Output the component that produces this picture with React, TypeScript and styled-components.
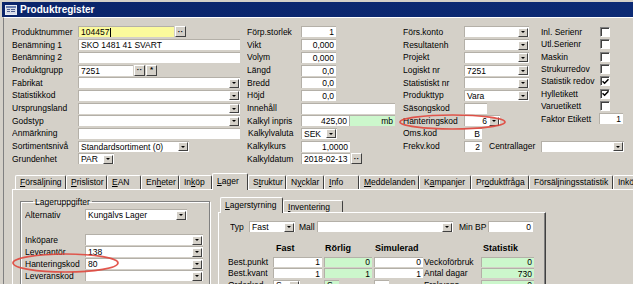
import React from "react";
import styled, { createGlobalStyle } from "styled-components";

const GlobalStyle = createGlobalStyle`
  html, body {
    margin: 0;
    padding: 0;
    background: #d4d0c8;
  }
  body {
    font-family: "Liberation Sans", Arial, sans-serif;
    font-size: 8.5px;
    color: #000;
  }
`;

const Window = styled.div`
  position: relative;
  width: 633px;
  height: 284px;
  overflow: hidden;
  background: #d4d0c8;
  display: flex;
  flex-direction: column;
`;

const TitleBar = styled.div`
  flex-shrink: 0;
  height: 15px;
  margin: 2px 0 0 2px;
  padding-left: 3px;
  display: flex;
  align-items: center;
  gap: 3px;
  background: linear-gradient(90deg, #0a246a 0%, #0c2a74 100%);
  color: #fff;
  font-size: 10px;
  font-weight: bold;
`;

const Body = styled.div`
  flex: 1;
  min-height: 0;
  margin-left: 3px;
  padding-left: 8px;
  border-left: 1px solid #808080;
  border-top: 1px solid #fff;
  display: flex;
  flex-direction: column;
`;

const TopForm = styled.div`
  display: flex;
  padding-top: 7.6px;
  flex-shrink: 0;
`;

const Column = styled.div<{ $w?: number }>`
  display: flex;
  flex-direction: column;
  flex-shrink: 0;
  width: ${(p) => (p.$w ? `${p.$w}px` : "auto")};
`;

const Row = styled.div<{ $h?: number }>`
  display: flex;
  align-items: center;
  height: ${(p) => p.$h ?? 12.7}px;
  flex-shrink: 0;
  white-space: nowrap;
`;

const Label = styled.span<{ $w: number; $indent?: number; $gap?: number }>`
  flex-shrink: 0;
  box-sizing: border-box;
  width: ${(p) => p.$w}px;
  margin-left: ${(p) => p.$gap ?? 0}px;
  padding-left: ${(p) => p.$indent ?? 0}px;
  overflow: hidden;
`;

const Field = styled.div<{ $w: number; $bg?: string; $h?: number }>`
  box-sizing: border-box;
  flex-shrink: 0;
  width: ${(p) => p.$w}px;
  height: ${(p) => p.$h ?? 11}px;
  display: flex;
  align-items: center;
  background: ${(p) => p.$bg ?? "#fff"};
  border-top: 1px solid #b4b0a8;
  border-left: 1px solid #b4b0a8;
  overflow: hidden;
  white-space: nowrap;
`;

const Value = styled.span<{ $align?: "left" | "right" }>`
  flex: 1;
  padding: 0 2px;
  text-align: ${(p) => p.$align ?? "left"};
  overflow: hidden;
  display: flex;
  align-items: center;
  justify-content: ${(p) => (p.$align === "right" ? "flex-end" : "flex-start")};
`;

const Caret = styled.span`
  display: inline-block;
  width: 1px;
  height: 9px;
  margin-left: 1px;
  background: #000;
`;

const DropArrow = styled.span`
  flex-shrink: 0;
  box-sizing: border-box;
  width: 10px;
  height: 9px;
  margin-right: 1px;
  background: #d4d0c8;
  border-top: 1px solid #fff;
  border-left: 1px solid #fff;
  border-right: 1px solid #404040;
  border-bottom: 1px solid #404040;
  display: flex;
  align-items: center;
  justify-content: center;
  &::after {
    content: "";
    border-left: 2px solid transparent;
    border-right: 2px solid transparent;
    border-top: 2px solid #000;
  }
`;

const SmallButton = styled.span`
  flex-shrink: 0;
  box-sizing: border-box;
  width: 11px;
  height: 11px;
  margin-left: 1px;
  background: #d4d0c8;
  border-top: 1px solid #fff;
  border-left: 1px solid #fff;
  border-right: 1px solid #404040;
  border-bottom: 1px solid #404040;
  display: flex;
  align-items: center;
  justify-content: center;
  font-size: 8px;
  font-weight: bold;
  line-height: 1;
`;

const Check = styled.span`
  flex-shrink: 0;
  box-sizing: border-box;
  width: 10px;
  height: 10px;
  background: #fff;
  border-top: 1px solid #808080;
  border-left: 1px solid #808080;
  border-right: 1px solid #fff;
  border-bottom: 1px solid #fff;
  box-shadow: inset 1px 1px 0 #404040;
  display: flex;
  align-items: center;
  justify-content: center;
`;

const TabStrip = styled.div<{ $h: number; $pad: number }>`
  flex-shrink: 0;
  display: flex;
  align-items: flex-end;
  height: ${(p) => p.$h}px;
  padding-left: ${(p) => p.$pad}px;
`;

const Tab = styled.div<{ $w: number; $h: number; $active?: boolean }>`
  position: relative;
  z-index: ${(p) => (p.$active ? 2 : 0)};
  box-sizing: border-box;
  flex-shrink: 0;
  width: ${(p) => p.$w}px;
  height: ${(p) => (p.$active ? p.$h + 3 : p.$h)}px;
  margin-bottom: ${(p) => (p.$active ? -1 : 0)}px;
  padding: ${(p) => (p.$active ? "2px 0 0 4px" : "1px 0 0 4px")};
  line-height: 11px;
  background: #d4d0c8;
  border-top: 1px solid #fff;
  border-left: 1px solid #fff;
  border-right: 1px solid #404040;
  border-radius: 2px 2px 0 0;
  white-space: nowrap;
  overflow: hidden;
`;

const Panel = styled.div`
  position: relative;
  z-index: 1;
  flex: 1;
  display: flex;
  align-items: flex-start;
  border-top: 1px solid #fff;
  border-left: 1px solid #fff;
`;

const GroupBox = styled.fieldset`
  box-sizing: border-box;
  flex-shrink: 0;
  width: 190px;
  height: 110px;
  margin: 7px 0 0 7px;
  padding: 0 0 0 4px;
  border: 1px solid #808080;
  box-shadow: 1px 1px 0 #fff, inset 1px 1px 0 #fff;
`;

const Legend = styled.legend`
  margin-left: 8px;
  padding: 0 2px;
  line-height: 10px;
`;

const StockBlock = styled.div`
  flex-shrink: 0;
  width: 328px;
  margin: 7px 0 0 8px;
  display: flex;
  flex-direction: column;
`;

const InnerPanel = styled.div`
  position: relative;
  z-index: 1;
  box-sizing: border-box;
  height: 90px;
  padding: 7.4px 0 0 9px;
  border-top: 1px solid #fff;
  border-left: 1px solid #fff;
  border-right: 1px solid #404040;
  box-shadow: inset -1px 0 0 #808080;
`;

const StatGrid = styled.div`
  display: grid;
  grid-template-columns: 45px 51px 50px 50px 57px 53px;
  grid-auto-rows: 11.6px;
  align-items: center;
  margin-top: 2.8px;
  white-space: nowrap;
`;

const HeaderRow = styled.div`
  display: grid;
  grid-template-columns: 45px 51px 50px 50px 57px 53px;
  height: 10px;
  margin-top: 10px;
  align-items: center;
  font-size: 9px;
  font-weight: bold;
  white-space: nowrap;
`;

const Head = styled.span<{ $col: number; $pad?: number }>`
  grid-column: ${(p) => p.$col};
  padding-left: ${(p) => p.$pad ?? 1}px;
`;

const Annotation = styled.svg<{ $x: number; $y: number }>`
  position: absolute;
  left: ${(p) => p.$x}px;
  top: ${(p) => p.$y}px;
  z-index: 10;
  pointer-events: none;
`;

type FieldProps = {
  w: number;
  value?: React.ReactNode;
  bg?: string;
  right?: boolean;
  h?: number;
};

const TextField = ({ w, value, bg, right, h }: FieldProps) => (
  <Field $w={w} $bg={bg} $h={h}>
    <Value $align={right ? "right" : "left"}>{value}</Value>
  </Field>
);

const Combo = ({ w, value, bg, right, h }: FieldProps) => (
  <Field $w={w} $bg={bg} $h={h}>
    <Value $align={right ? "right" : "left"}>{value}</Value>
    <DropArrow />
  </Field>
);

const CheckBox = ({ checked }: { checked?: boolean }) => (
  <Check>
    {checked && (
      <svg width="7" height="7" viewBox="0 0 7 7">
        <path d="M0.5 3.2 L2.6 5.3 L6.5 1.2" fill="none" stroke="#000" strokeWidth="1.5" />
      </svg>
    )}
  </Check>
);

const WindowIcon = () => (
  <svg width="12" height="10" viewBox="0 0 12 10">
    <rect x="0.5" y="0.5" width="11" height="9" fill="#d8dce8" stroke="#e8ecf4" />
    <rect x="1" y="1" width="10" height="2" fill="#6a7fb0" />
    <rect x="2" y="4" width="3" height="1" fill="#506090" />
    <rect x="6" y="4" width="4" height="1" fill="#506090" />
    <rect x="2" y="6" width="3" height="1" fill="#506090" />
    <rect x="6" y="6" width="4" height="1" fill="#506090" />
  </svg>
);

const Ellipse = ({ x, y, w, h }: { x: number; y: number; w: number; h: number }) => (
  <Annotation $x={x} $y={y} width={w} height={h} viewBox={`0 0 ${w} ${h}`}>
    <ellipse
      cx={w / 2}
      cy={h / 2}
      rx={w / 2 - 1}
      ry={h / 2 - 1}
      fill="none"
      stroke="#e0463c"
      strokeWidth="1.7"
      opacity="0.9"
    />
  </Annotation>
);

const YELLOW = "#fbfa9c";
const GREEN = "#ccf7cc";

const mainTabs: { label: React.ReactNode; w: number; active?: boolean }[] = [
  { label: <><u>F</u>örsäljning</>, w: 51 },
  { label: <><u>P</u>rislistor</>, w: 41 },
  { label: <><u>E</u>AN</>, w: 34 },
  { label: <>En<u>h</u>eter</>, w: 38 },
  { label: <>In<u>k</u>öp</>, w: 33 },
  { label: <><u>L</u>ager</>, w: 36, active: true },
  { label: <>S<u>t</u>ruktur</>, w: 38 },
  { label: <>N<u>y</u>cklar</>, w: 38 },
  { label: <><u>I</u>nfo</>, w: 35 },
  { label: <><u>M</u>eddelanden</>, w: 60 },
  { label: <>K<u>a</u>mpanjer</>, w: 52 },
  { label: <>Pr<u>o</u>duktfråga</>, w: 58 },
  { label: <>Försäljningsstatistik</>, w: 84 },
  { label: <>Inköpsstatistik</>, w: 60 },
];

const App = () => {
  return (
    <>
      <GlobalStyle />
      <Window>
        <TitleBar>
          <WindowIcon />
          Produktregister
        </TitleBar>
        <Body>
          <TopForm>
            <Column $w={235}>
              <Row>
                <Label $w={66}>Produktnummer</Label>
                <Field $w={96} $bg={YELLOW}>
                  <Value>
                    104457
                    <Caret />
                  </Value>
                </Field>
                <SmallButton>··</SmallButton>
              </Row>
              <Row>
                <Label $w={66}>Benämning 1</Label>
                <TextField w={162} value="SKO 1481 41 SVART" />
              </Row>
              <Row>
                <Label $w={66}>Benämning 2</Label>
                <TextField w={162} />
              </Row>
              <Row>
                <Label $w={66}>Produktgrupp</Label>
                <TextField w={55} value="7251" />
                <SmallButton>··</SmallButton>
                <SmallButton>*</SmallButton>
              </Row>
              <Row>
                <Label $w={66}>Fabrikat</Label>
                <Combo w={162} />
              </Row>
              <Row>
                <Label $w={66}>Statistikkod</Label>
                <Combo w={162} />
              </Row>
              <Row>
                <Label $w={66}>Ursprungsland</Label>
                <Combo w={162} />
              </Row>
              <Row>
                <Label $w={66}>Godstyp</Label>
                <Combo w={162} />
              </Row>
              <Row>
                <Label $w={66}>Anmärkning</Label>
                <TextField w={162} />
              </Row>
              <Row>
                <Label $w={66}>Sortimentsnivå</Label>
                <Combo w={111} value="Standardsortiment (0)" />
              </Row>
              <Row>
                <Label $w={66}>Grundenhet</Label>
                <Combo w={36} value="PAR" />
              </Row>
            </Column>

            <Column $w={156}>
              <Row>
                <Label $w={54}>Förp.storlek</Label>
                <TextField w={35} value="1" right />
              </Row>
              <Row>
                <Label $w={54}>Vikt</Label>
                <TextField w={35} value="0,000" right />
              </Row>
              <Row>
                <Label $w={54}>Volym</Label>
                <TextField w={35} value="0,000" right />
              </Row>
              <Row>
                <Label $w={54}>Längd</Label>
                <TextField w={35} value="0,0" right />
              </Row>
              <Row>
                <Label $w={54}>Bredd</Label>
                <TextField w={35} value="0,0" right />
              </Row>
              <Row>
                <Label $w={54}>Höjd</Label>
                <TextField w={35} value="0,0" right />
              </Row>
              <Row>
                <Label $w={54}>Innehåll</Label>
                <TextField w={94} />
              </Row>
              <Row>
                <Label $w={54}>Kalkyl inpris</Label>
                <TextField w={48} value="425,00" right />
                <TextField w={46} value="mb" right bg={GREEN} />
              </Row>
              <Row>
                <Label $w={54} $indent={1}>
                  Kalkylvaluta
                </Label>
                <Combo w={36} value="SEK" />
              </Row>
              <Row>
                <Label $w={54}>Kalkylkurs</Label>
                <TextField w={49} value="1,0000" right />
              </Row>
              <Row>
                <Label $w={54}>Kalkyldatum</Label>
                <TextField w={49} value="2018-02-13" />
                <SmallButton>··</SmallButton>
              </Row>
            </Column>

            <Column $w={138}>
              <Row>
                <Label $w={61}>Förs.konto</Label>
                <Combo w={65} />
              </Row>
              <Row>
                <Label $w={61}>Resultatenh</Label>
                <Combo w={65} />
              </Row>
              <Row>
                <Label $w={61}>Projekt</Label>
                <Combo w={65} />
              </Row>
              <Row>
                <Label $w={61}>Logiskt nr</Label>
                <Combo w={65} value="7251" />
              </Row>
              <Row>
                <Label $w={61}>Statistiskt nr</Label>
                <Combo w={65} />
              </Row>
              <Row>
                <Label $w={61}>Produkttyp</Label>
                <Combo w={65} value="Vara" />
              </Row>
              <Row>
                <Label $w={61}>Säsongskod</Label>
                <TextField w={23} />
              </Row>
              <Row>
                <Label $w={61}>Hanteringskod</Label>
                <Combo w={36} value="6" right />
              </Row>
              <Row>
                <Label $w={61}>Oms.kod</Label>
                <TextField w={18} value="B" right />
              </Row>
              <Row>
                <Label $w={61}>Frekv.kod</Label>
                <TextField w={18} value="2" right />
                <Label $w={52} $gap={7}>
                  Centrallager
                </Label>
                <Combo w={83} />
              </Row>
            </Column>

            <Column>
              <Row $h={12.4}>
                <Label $w={59}>Inl. Serienr</Label>
                <CheckBox />
              </Row>
              <Row $h={12.4}>
                <Label $w={59}>Utl.Serienr</Label>
                <CheckBox />
              </Row>
              <Row $h={12.4}>
                <Label $w={59}>Maskin</Label>
                <CheckBox />
              </Row>
              <Row $h={12.4}>
                <Label $w={59}>Strukurredov</Label>
                <CheckBox />
              </Row>
              <Row $h={12.4}>
                <Label $w={59}>Statistik redov</Label>
                <CheckBox checked />
              </Row>
              <Row $h={12.4}>
                <Label $w={59}>Hylletikett</Label>
                <CheckBox checked />
              </Row>
              <Row $h={12.4}>
                <Label $w={59}>Varuetikett</Label>
                <CheckBox />
              </Row>
              <Row $h={12.4}>
                <Label $w={58}>Faktor Etikett</Label>
                <TextField w={24} value="1" right />
              </Row>
            </Column>
          </TopForm>

          <TabStrip $h={14} $pad={3} style={{ marginTop: 9.7 }}>
            {mainTabs.map((t, i) => (
              <Tab key={i} $w={t.w} $h={14} $active={t.active}>
                {t.label}
              </Tab>
            ))}
          </TabStrip>

          <Panel>
            <GroupBox>
              <Legend>Lageruppgifter</Legend>
              <Row style={{ marginTop: 1.6 }}>
                <Label $w={60}>Alternativ</Label>
                <Combo w={102} value="Kungälvs Lager" />
              </Row>
              <Row $h={12} style={{ marginTop: 12.6 }}>
                <Label $w={60}>Inköpare</Label>
                <Combo w={118} />
              </Row>
              <Row $h={12}>
                <Label $w={60}>Leverantör</Label>
                <Combo w={118} value="138" />
              </Row>
              <Row $h={12}>
                <Label $w={60}>Hanteringskod</Label>
                <Combo w={118} value="80" />
              </Row>
              <Row $h={12}>
                <Label $w={60}>Leveranskod</Label>
                <Combo w={118} />
              </Row>
            </GroupBox>

            <StockBlock>
              <TabStrip $h={15} $pad={2}>
                <Tab $w={63} $h={13} $active>
                  <u>L</u>agerstyrning
                </Tab>
                <Tab $w={60} $h={12}>
                  <u>I</u>nventering
                </Tab>
              </TabStrip>
              <InnerPanel>
                <Row style={{ paddingLeft: 2 }}>
                  <Label $w={19}>Typ</Label>
                  <Combo w={46} value="Fast" />
                  <Label $w={18} $gap={4}>
                    Mall
                  </Label>
                  <Combo w={136} />
                  <Label $w={29} $gap={6}>
                    Min BP
                  </Label>
                  <TextField w={45} value="0" right />
                </Row>
                <HeaderRow>
                  <Head $col={2} $pad={3}>
                    Fast
                  </Head>
                  <Head $col={3}>Rörlig</Head>
                  <Head $col={4}>Simulerad</Head>
                  <Head $col={6} $pad={2}>
                    Statistik
                  </Head>
                </HeaderRow>
                <StatGrid>
                  <span>Best.punkt</span>
                  <TextField w={49} h={10} value="1" right />
                  <TextField w={48} h={10} value="0" right bg={GREEN} />
                  <TextField w={49} h={10} value="0" right />
                  <span>Veckoförbruk</span>
                  <TextField w={53} h={10} value="0" right bg={GREEN} />

                  <span>Best.kvant</span>
                  <TextField w={49} h={10} value="1" right />
                  <TextField w={48} h={10} value="1" right bg={GREEN} />
                  <TextField w={49} h={10} value="1" right />
                  <span>Antal dagar</span>
                  <TextField w={53} h={10} value="730" right bg={GREEN} />

                  <span>Orderkod</span>
                  <Combo w={27} h={10} value="S" />
                  <TextField w={15} h={10} value="S" bg={GREEN} />
                  <TextField w={15} h={10} />
                  <span>Frekvens</span>
                  <TextField w={53} h={10} value="0" right bg={GREEN} />
                </StatGrid>
              </InnerPanel>
            </StockBlock>
          </Panel>
        </Body>

        <Ellipse x={399} y={114} w={107} h={16} />
        <Ellipse x={12} y={253} w={107} h={20} />
      </Window>
    </>
  );
};

export default App;
